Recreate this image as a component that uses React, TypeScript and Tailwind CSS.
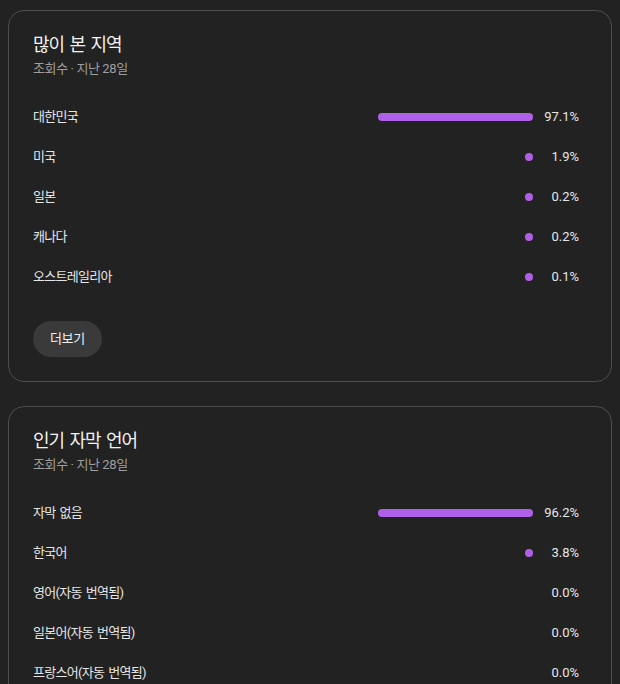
import React from "react";

type Row = { label: string; value: number; text: string };

const regions: Row[] = [
  { label: "대한민국", value: 97.1, text: "97.1%" },
  { label: "미국", value: 1.9, text: "1.9%" },
  { label: "일본", value: 0.2, text: "0.2%" },
  { label: "캐나다", value: 0.2, text: "0.2%" },
  { label: "오스트레일리아", value: 0.1, text: "0.1%" },
];

const langs: Row[] = [
  { label: "자막 없음", value: 96.2, text: "96.2%" },
  { label: "한국어", value: 3.8, text: "3.8%" },
  { label: "영어(자동 번역됨)", value: 0, text: "0.0%" },
  { label: "일본어(자동 번역됨)", value: 0, text: "0.0%" },
  { label: "프랑스어(자동 번역됨)", value: 0, text: "0.0%" },
];

function DataRow({ row, max }: { row: Row; max: number }) {
  const w = row.value > 0 ? Math.max(8, Math.round((row.value / max) * 155)) : 0;
  return (
    <div className="flex h-10 items-center pr-2">
      <div className="flex-1 text-[13px] tracking-[-0.055em] [word-spacing:0.12em] text-[#e6e6e6]">{row.label}</div>
      <div className="flex w-[160px] justify-end">
        {w > 0 && <div className="h-2 rounded-full bg-[#b060e8]" style={{ width: w }} />}
      </div>
      <div className="w-[46px] text-right text-[13px] text-[#e6e6e6]">{row.text}</div>
    </div>
  );
}

function Card({ title, rows, more }: { title: string; rows: Row[]; more?: boolean }) {
  const max = Math.max(...rows.map((r) => r.value));
  return (
    <div className="mx-2 rounded-[16px] border border-[#4e4e4e] px-6 pt-[22px] pb-6">
      <div className="text-[18px] leading-6 tracking-[-0.06em] [word-spacing:0.12em] text-[#f1f1f1]">{title}</div>
      <div className="mt-1 text-[13px] leading-4 tracking-[-0.03em] text-[#9e9e9e]">조회수 · 지난 28일</div>
      <div className="mt-5">
        {rows.map((r) => (
          <DataRow key={r.label} row={r} max={max} />
        ))}
      </div>
      {more && (
        <button className="mt-6 h-9 rounded-full bg-[#3a3a3a] px-[17px] text-[13px] font-normal tracking-[-0.03em] text-[#f1f1f1]">
          더보기
        </button>
      )}
    </div>
  );
}

export default function App() {
  return (
    <div
      className="min-h-[684px] bg-[#222222] pt-[10px]"
      style={{ fontFamily: 'Roboto, "Noto Sans CJK KR", sans-serif' }}
    >
      <div className="flex flex-col gap-6">
        <Card title="많이 본 지역" rows={regions} more />
        <Card title="인기 자막 언어" rows={langs} />
      </div>
    </div>
  );
}
